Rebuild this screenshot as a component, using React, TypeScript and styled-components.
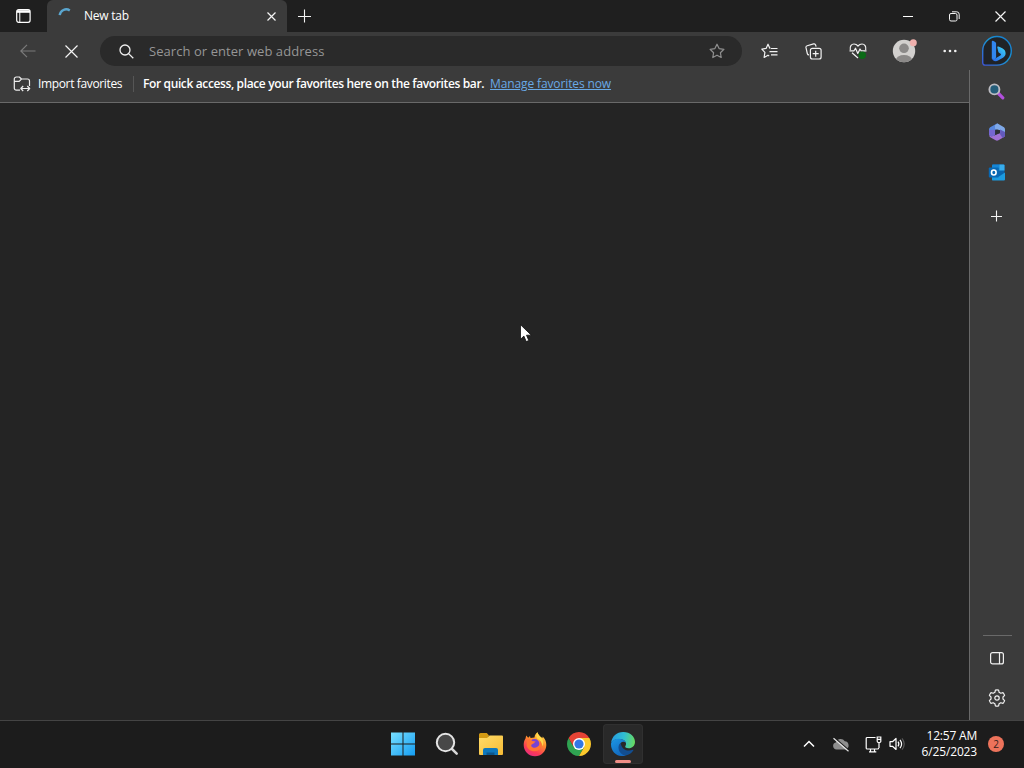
import React from 'react';
import styled, { createGlobalStyle, css } from 'styled-components';

function App() {
  return (
    <Desktop>
      <GlobalStyle />
      <Browser>
        <TitleBar>
          <Slot $w={47}>
            <TabActionsIcon />
          </Slot>
          <Tab>
            <SpinnerIcon />
            <TabTitle>New tab</TabTitle>
            <CrossIcon size={9} />
          </Tab>
          <Slot $w={35}>
            <PlusIcon size={14} />
          </Slot>
          <Spacer />
          <Slot $w={46}>
            <svg width="10" height="10">
              <path d="M0 5.5h10" stroke="#fff" />
            </svg>
          </Slot>
          <Slot $w={46}>
            <RestoreIcon />
          </Slot>
          <Slot $w={47}>
            <CrossIcon size={11} />
          </Slot>
        </TitleBar>

        <Toolbar>
          <Slot $w={44}>
            <BackIcon />
          </Slot>
          <Slot $w={43}>
            <CrossIcon size={13} />
          </Slot>
          <AddressBar>
            <SearchIcon />
            <Placeholder>Search or enter web address</Placeholder>
            <StarIcon />
          </AddressBar>
          <Slot $w={43}>
            <FavoritesIcon />
          </Slot>
          <Slot $w={45}>
            <CollectionsIcon />
          </Slot>
          <Slot $w={44}>
            <EssentialsIcon />
          </Slot>
          <Slot $w={48}>
            <ProfileIcon />
          </Slot>
          <Slot $w={44}>
            <svg width="14" height="4" fill="#f2f2f2">
              <circle cx="1.7" cy="2" r="1.3" />
              <circle cx="7" cy="2" r="1.3" />
              <circle cx="12.3" cy="2" r="1.3" />
            </svg>
          </Slot>
          <Slot $w={50}>
            <BingIcon />
          </Slot>
        </Toolbar>

        <Body>
          <Main>
            <FavoritesBar>
              <ImportIcon />
              <ImportLabel>Import favorites</ImportLabel>
              <Separator />
              <Hint>For quick access, place your favorites here on the favorites bar.</Hint>
              <ManageLink>Manage favorites now</ManageLink>
            </FavoritesBar>
            <Page />
          </Main>
          <Sidebar>
            <SideItem $h={42}>
              <SidebarSearchIcon />
            </SideItem>
            <SideItem $h={40}>
              <OfficeIcon />
            </SideItem>
            <SideItem $h={40}>
              <OutlookIcon />
            </SideItem>
            <SideItem $h={47}>
              <PlusIcon size={12} />
            </SideItem>
            <Spacer />
            <SideRule />
            <SideItem $h={40}>
              <PanelIcon />
            </SideItem>
            <SideItem $h={40}>
              <GearIcon />
            </SideItem>
          </Sidebar>
        </Body>
      </Browser>

      <Taskbar>
        <Apps>
          <AppButton>
            <WindowsIcon />
          </AppButton>
          <AppButton>
            <TaskSearchIcon />
          </AppButton>
          <AppButton>
            <ExplorerIcon />
          </AppButton>
          <AppButton>
            <FirefoxIcon />
          </AppButton>
          <AppButton>
            <ChromeIcon />
          </AppButton>
          <AppButton $active>
            <EdgeIcon />
          </AppButton>
        </Apps>
        <Tray>
          <Slot $w={32}>
            <svg width="12" height="8" fill="none" stroke="#fff" strokeWidth="1.5">
              <path d="M1 6.5l5-5 5 5" />
            </svg>
          </Slot>
          <Slot $w={32}>
            <CloudIcon />
          </Slot>
          <Slot $w={32}>
            <NetworkIcon />
          </Slot>
          <Slot $w={16}>
            <SpeakerIcon />
          </Slot>
          <Clock>
            <ClockLine $spacing={-0.2}>12:57 AM</ClockLine>
            <ClockLine $spacing={-0.16}>6/25/2023</ClockLine>
          </Clock>
          <Badge>2</Badge>
        </Tray>
      </Taskbar>
      <Pointer width="14" height="20" viewBox="0 0 14 20">
        <path d="M.5.7v14.6l3.4-3.2 2.3 5.5 2.6-1.1-2.3-5.3h4.8z" fill="#fff" stroke="#111" strokeWidth=".8" />
      </Pointer>
    </Desktop>
  );
}

export default App;

// Icons
function TabActionsIcon() {
  return (
    <svg width="15" height="14" fill="none" stroke="#fff" strokeWidth="1.2">
      <rect x=".7" y=".7" width="13.400" height="12.6" rx="2" />
      <path d="M1 2.500h13" strokeWidth="2.600" />
      <path d="M3.800 3v10" strokeWidth="1" />
    </svg>
  );
}

function SpinnerIcon() {
  return (
    <Spinner width="16" height="16" fill="none">
      <path d="M1.700 7.200A6.500 6.500 0 0 1 11.800 2.500" stroke="#5aa6cf" strokeWidth="2.400" />
    </Spinner>
  );
}

function CrossIcon({ size }: { size: number }) {
  return (
    <svg width={size} height={size} viewBox={`0 0 ${size} ${size}`} fill="none" stroke="#f4f4f4" strokeWidth="1.2">
      <path d={`M.5.5L${size - 0.5} ${size - 0.5}M${size - 0.5}.5L.5 ${size - 0.5}`} />
    </svg>
  );
}

function PlusIcon({ size }: { size: number }) {
  const mid = size / 2 - 0.5;

  return (
    <svg width={size} height={size} fill="none" stroke="#f4f4f4" strokeWidth="1.1">
      <path d={`M${mid} .5v${size - 1}M0 ${mid + 1}h${size - 1}`} />
    </svg>
  );
}

function RestoreIcon() {
  return (
    <svg width="11" height="11" fill="none" stroke="#f4f4f4">
      <rect x=".5" y="2.5" width="7.5" height="7.5" rx="1.5" />
      <path d="M3 .8h4.7A2.5 2.5 0 0 1 10.200 3.300V8" />
    </svg>
  );
}

function BackIcon() {
  return (
    <svg width="16" height="14" fill="none" stroke="#7b7b7b" strokeWidth="1.2">
      <path d="M15.500 7H1M7 .8L.8 7 7 13.200" />
    </svg>
  );
}

function SearchIcon() {
  return (
    <svg width="15" height="15" fill="none" stroke="#f0f0f0" strokeWidth="1.3">
      <circle cx="6" cy="6" r="5" />
      <path d="M9.600 9.600l4.700 4.700" />
    </svg>
  );
}

const STAR = 'M8 1.200l2.100 4.400 4.800.7-3.500 3.400.8 4.800L8 12.200l-4.200 2.300.8-4.800L1.100 6.300l4.800-.7z';

function StarIcon() {
  return (
    <svg width="16" height="16" fill="none" stroke="#909090" strokeWidth="1.2" strokeLinejoin="round">
      <path d={STAR} />
    </svg>
  );
}

function FavoritesIcon() {
  return (
    <svg width="17" height="16" fill="none" stroke="#f2f2f2" strokeWidth="1.2" strokeLinejoin="round">
      <path d="M9.500 5.200h-.7L7 1.200 5.100 5.400.8 6.100l3.100 3.200-.8 5.200 3.900-2.300 1.200.7" />
      <path d="M10 5.500h6.500M8.500 8.700h8M10 11.900h6.500" />
    </svg>
  );
}

function CollectionsIcon() {
  return (
    <svg width="17" height="17" fill="none" stroke="#f2f2f2" strokeWidth="1.2">
      <path d="M4 11.900c-1 0-1.500-.5-1.700-1.400L1 4.700c-.2-1 .2-1.700 1.200-2L8.600.9c1-.3 1.700.1 2 1.100l.5 1.600" />
      <rect x="5.400" y="5.300" width="10.700" height="10.700" rx="2" />
      <path d="M10.700 7.700v6M7.700 10.700h6" />
    </svg>
  );
}

function EssentialsIcon() {
  return (
    <svg width="18" height="16" fill="none" stroke="#f2f2f2" strokeWidth="1.200" strokeLinejoin="round">
      <path d="M1.300 7C.6 3.500 2.400 1 5 1c1.700 0 3 .8 4 2 1-1.200 2.300-2 4-2 2.600 0 4.400 2.500 3.700 6" />
      <path d="M.5 7.800H5l1.500-2.600 2.300 5.200L11 6l1.200 1.800h5.300M3 9.800l6 5.200" />
      <circle cx="13.300" cy="12.200" r="3.700" fill="#0b6a17" stroke="none" />
    </svg>
  );
}

function ProfileIcon() {
  return (
    <svg width="26" height="26">
      <clipPath id="face">
        <circle cx="13" cy="13" r="11.200" />
      </clipPath>
      <g clipPath="url(#face)">
        <rect width="26" height="26" fill="#d2d0ce" />
        <circle cx="13" cy="10.300" r="4.800" fill="#8b8988" />
        <ellipse cx="13" cy="22" rx="8" ry="5" fill="#8b8988" />
      </g>
      <circle cx="22.300" cy="4.700" r="3.500" fill="#eeb0ad" />
    </svg>
  );
}

function BingIcon() {
  return (
    <svg width="32" height="32">
      <defs>
        <linearGradient id="bingRing" x1="0" y1="1" x2="1" y2="0">
          <stop offset="0" stopColor="#3d55d8" />
          <stop offset=".5" stopColor="#1a93d0" />
          <stop offset="1" stopColor="#1679cf" />
        </linearGradient>
        <linearGradient id="bingMark" x1="0" y1="1" x2="1" y2="0">
          <stop offset="0" stopColor="#2a64e6" />
          <stop offset=".6" stopColor="#32a6f5" />
          <stop offset="1" stopColor="#42ddf3" />
        </linearGradient>
      </defs>
      <path
        d="M16 1.500a14.300 14.300 0 1 1 0 28.600H4.200c-1.600 0-2.500-.9-2.500-2.500V15.800A14.300 14.300 0 0 1 16 1.500z"
        fill="#202327"
        stroke="url(#bingRing)"
        strokeWidth="1.400"
      />
      <path d="M10.800 6.500c0-.7.600-1 1.200-.7l2.200 1.200c.6.400.9.900.9 1.600v13.600l-1.300 2.800-3-1.200z" fill="#3186f0" />
      <path
        d="M16.400 12.800c-.5-1 .1-1.700 1.100-1.300l3.800 1.800c2.100 1 3.300 2.700 3.300 5 0 2-.9 3.400-2.600 4.400l-5 2.900c-2.900 1.600-6.200-.2-6.200-3.200.8 1.400 2.400 1.700 3.800.8l4.700-2.800c.9-.6.9-1.500-.1-2l-.8-.4c-.6-.3-.9-.7-1.100-1.300z"
        fill="url(#bingMark)"
      />
    </svg>
  );
}

function ImportIcon() {
  return (
    <svg width="18" height="16" fill="none" stroke="#ededed" strokeWidth="1.200" strokeLinejoin="round">
      <path d="M7 14.200H3.300A2 2 0 0 1 1.300 12.200V3a2 2 0 0 1 2-2h3l2.200 2h6a2 2 0 0 1 2 2v5M1.300 5.300h4.900l2.300-2.300" />
      <path d="M8 12.500h8.500M10.200 10L7.800 12.500l2.400 2.500M14.300 10l2.400 2.500-2.400 2.500" />
    </svg>
  );
}

function SidebarSearchIcon() {
  return (
    <svg width="18" height="17">
      <path d="M10.500 10.500l4.300 4.300" stroke="#b14fdc" strokeWidth="3.200" strokeLinecap="round" />
      <circle cx="6.400" cy="6.400" r="5" fill="#245d79" stroke="#bcbcc2" strokeWidth="1.900" />
    </svg>
  );
}

function OfficeIcon() {
  return (
    <svg width="18" height="18">
      <path d="M8.500.7L2.600 4.100C1.500 4.700 1 5.600 1 6.800v5l4.700 2.500 1.500-7L12 4.500V2.500L10 .9c-.5-.4-1-.5-1.500-.2z" fill="#5787dd" />
      <path d="M9.500.6L15.600 4.100c.9.500 1.400 1.400 1.400 2.500v5.200l-4.700.5-.3-5-5-1.500V2.200z" fill="#7fa9e8" />
      <path d="M17 9.500v2.400c0 1-.5 1.900-1.400 2.400l-5.200 3c-.9.500-1.900.5-2.800 0l-5-2.900C1.700 13.900 1.200 13.200 1 12.300c1.500 1.200 4 1.200 5.500.2l5.600-3.300z" fill="#a172d3" />
      <path d="M1 7v5c1 1.300 3.400 1.700 5 .8l1.200-.7V6.700z" fill="#7566cf" />
      <path d="M12.100 6.500L17 9v2.900c0 1-.5 1.900-1.400 2.400l-1 .6-2.500-3.600z" fill="#625abb" />
      <path d="M7.200 6.700L12 7.500v2.700L7.200 12z" fill="#2d3035" />
    </svg>
  );
}

function OutlookIcon() {
  return (
    <svg width="18" height="17">
      <rect x="4" y=".5" width="12.500" height="14" rx="1" fill="#0a64ad" />
      <path d="M5 .5h6.300v6H4V1.500a1 1 0 0 1 1-1z" fill="#1686d5" />
      <path d="M11.300.5h4.200a1 1 0 0 1 1 1v5h-5.200z" fill="#38adec" />
      <path d="M4 16V9l7 3.500L17 8.600v6.900a1 1 0 0 1-1 1H4.500z" fill="#1c9be0" />
      <rect x=".8" y="3.500" width="10" height="10" rx="1" fill="#0868b4" />
      <ellipse cx="5.800" cy="8.500" rx="2.300" ry="2.500" fill="none" stroke="#fff" strokeWidth="1.600" />
    </svg>
  );
}

function PanelIcon() {
  return (
    <svg width="14" height="13" fill="none" stroke="#f0f0f0" strokeWidth="1.200">
      <rect x=".6" y=".6" width="12.800" height="11.300" rx="2" />
      <path d="M9.500 1v11" />
    </svg>
  );
}

function GearIcon() {
  return (
    <svg width="18" height="18" fill="none" stroke="#f0f0f0" strokeWidth="1.200" strokeLinejoin="round">
      <path d="M7.400 1.100q1.600-.4 3.200 0l.5 2.200q.8.600 1.700 1l2.200-.7q1.100 1.200 1.600 2.800L15 8q-.1 1 0 2l1.600 1.600q-.5 1.600-1.600 2.800l-2.200-.7q-.9.400-1.700 1l-.5 2.200q-1.600.4-3.200 0l-.5-2.200q-.8-.6-1.700-1l-2.200.7Q1.900 13.200 1.400 11.600L3 10q.1-1 0-2L1.400 6.400Q1.900 4.800 3 3.600l2.200.7q.9-.4 1.700-1z" />
      <circle cx="9" cy="9" r="2.200" />
    </svg>
  );
}

function WindowsIcon() {
  return (
    <svg width="25" height="24">
      <linearGradient id="win" x1="0" y1="0" x2="24" y2="24" gradientUnits="userSpaceOnUse">
        <stop offset="0" stopColor="#79e0ff" />
        <stop offset="1" stopColor="#139cf2" />
      </linearGradient>
      <path d="M0 .5h11.500v11H0zM12.500.5H24v11H12.500zM0 12.500h11.500v11H0zM12.500 12.500H24v11H12.500z" fill="url(#win)" />
    </svg>
  );
}

function TaskSearchIcon() {
  return (
    <svg width="24" height="24">
      <path d="M16.500 16.500l5.200 5.200" stroke="#d7d7d7" strokeWidth="2.500" strokeLinecap="round" />
      <circle cx="10.500" cy="10.500" r="8.700" fill="#484848" stroke="#e4e4e4" strokeWidth="2" />
    </svg>
  );
}

function ExplorerIcon() {
  return (
    <svg width="26" height="24">
      <linearGradient id="folder" x1="0" y1="0" x2="1" y2="1">
        <stop offset="0" stopColor="#ffdc69" />
        <stop offset="1" stopColor="#f6bb35" />
      </linearGradient>
      <path d="M1 2.500A1.500 1.500 0 0 1 2.500 1h6.300L11 3.500l-2 4H1z" fill="#d39a13" />
      <path d="M1 6h8l2.500-2.500H24a1 1 0 0 1 1 1V22a1 1 0 0 1-1 1H2a1 1 0 0 1-1-1z" fill="url(#folder)" />
      <path d="M5 23v-5a2 2 0 0 1 2-2h11a2 2 0 0 1 2 2v5z" fill="#0e78bd" />
      <path d="M8.500 23v-2.500h8V23z" fill="#0d568c" />
    </svg>
  );
}

function FirefoxIcon() {
  return (
    <svg width="24" height="25">
      <linearGradient id="fox" x1="18" y1="0" x2="5" y2="24" gradientUnits="userSpaceOnUse">
        <stop offset="0" stopColor="#ffe449" />
        <stop offset=".4" stopColor="#ff8b2e" />
        <stop offset=".75" stopColor="#fb3a55" />
        <stop offset="1" stopColor="#e42b88" />
      </linearGradient>
      <path d="M2.500 6.500l.7-3 2 2.300L7 4l.5 2 4-.5c.2-2.300 1.200-4 3-5.200.4 2.400 2 3.400 3.500 5l1.500.8.2-1.600c2.600 2.400 3.600 5.300 3.600 8.500a11.300 11.300 0 1 1-22.600 0c0-2.500.5-4.700 1.800-6.500z" fill="url(#fox)" />
      <circle cx="11.500" cy="12" r="5" fill="#7543d4" />
      <path d="M4 7.500c2-.8 4-.2 5.300 1.500l3.400.6-2.500 2.200c-1.800.3-2.300 1.500-1.700 2.700 2.700 2.700 6.700.5 8-2 .7-2 .4-4-.9-5.500 3.700 1.700 4.200 7 1.400 10-4 4-11.500 2.500-13.300-3z" fill="#ff7334" />
      <path d="M14.500.3c.4 2.400 2 3.400 3.500 5 2.500 2.800 3 6 1.400 9-.3-4-2-5.800-4.600-7.300-2-1.400-1.600-4.700-.3-6.700z" fill="#ffd849" />
    </svg>
  );
}

function ChromeIcon() {
  return (
    <svg width="24" height="24">
      <path d="M1.610 6A12 12 0 0 0 12 24l5.200-9H6.800z" fill="#2fa351" />
      <path d="M22.390 6A12 12 0 0 1 12 24l5.200-9L12 6z" fill="#fcc92c" />
      <path d="M1.610 6l5.190 9L12 6h10.390A12 12 0 0 0 1.610 6z" fill="#e54335" />
      <circle cx="12" cy="12" r="6" fill="#fff" />
      <circle cx="12" cy="12" r="4.600" fill="#3277e5" />
    </svg>
  );
}

function EdgeIcon() {
  return (
    <svg width="24" height="24">
      <defs>
        <linearGradient id="edgeTop" x1="0" y1="8" x2="24" y2="12" gradientUnits="userSpaceOnUse">
          <stop offset="0" stopColor="#269be0" />
          <stop offset=".5" stopColor="#30bfd3" />
          <stop offset="1" stopColor="#6bdc58" />
        </linearGradient>
        <linearGradient id="edgeLow" x1="0" y1="8" x2="10" y2="24" gradientUnits="userSpaceOnUse">
          <stop offset="0" stopColor="#1b94e2" />
          <stop offset="1" stopColor="#1267bd" />
        </linearGradient>
      </defs>
      <path d="M.1 10.800C.9 4.400 5.700 0 12.200 0 19.300 0 24 4.800 24 10c0 3.800-2.900 6.300-6.300 6.300-2.800 0-4.100-.9-3.300-2.200 1.500-2.100.5-5.200-2.400-6.300C7.700 6 2 7.400.1 10.800z" fill="url(#edgeTop)" />
      <path d="M.1 11C1.800 7.700 5.600 6.300 9.500 7c2.900.5 4.800 1.800 5.500 3.700-1.800-1.500-4-1.300-5.300.2C6.800 14.500 9 21 15 23.500 6.500 26-.8 19.500.1 11z" fill="url(#edgeLow)" />
      <path d="M9.700 10.900C6 13 6.500 21.800 14.700 23.600c3.300-.6 6-2.500 7.700-5.300.3-.5 0-.7-.5-.5-5.600 2.400-11.500-.7-12.200-6.900z" fill="#124e91" />
    </svg>
  );
}

function CloudIcon() {
  return (
    <svg width="18" height="15">
      <path d="M4.500 12.500a3.500 3.500 0 0 1-.7-6.900 5 5 0 0 1 9-1.300 4.200 4.200 0 0 1 .8 8.200z" fill="#8e8e8e" />
      <path d="M2.200 .5l15 13" stroke="#1c1c1c" strokeWidth="1.200" />
      <path d="M1.500 1.200l15 13" stroke="#e5e5e5" strokeWidth="1.200" />
    </svg>
  );
}

function NetworkIcon() {
  return (
    <svg width="17" height="17" fill="none" stroke="#fff" strokeWidth="1.200">
      <path d="M10.500 1.500H2.300c-.7 0-1.100.4-1.100 1.100v9.300c0 .7.4 1.100 1.100 1.100h10.200c.7 0 1.100-.4 1.100-1.100M5.500 13v2.700M9.500 13v2.700M4 15.800h7.300" />
      <path d="M12.200 1h3.600v4.300c0 .8-.4 1.200-1.200 1.200H13.400c-.8 0-1.200-.4-1.200-1.200zM12.200 3.300h3.600M14 6.500V12" />
    </svg>
  );
}

function SpeakerIcon() {
  return (
    <svg width="17" height="14" fill="none" stroke="#fff" strokeWidth="1.200" strokeLinejoin="round">
      <path d="M1 4.700h2.500L7 1.500v11L3.500 9.300H1z" />
      <path d="M9 4.700q1.700 2.300 0 4.600M11 2.800q3.200 4.200 0 8.400" />
      <path d="M13 1.300q4.500 5.700 0 11.400" stroke="#585858" />
    </svg>
  );
}

// Styles
const GlobalStyle = createGlobalStyle`
  * {
    box-sizing: border-box;
  }

  body {
    margin: 0;
    overflow: hidden;
    font-family: 'Open Sans', 'Noto Sans', sans-serif;
    color: #fff;
  }

  svg {
    display: block;
    flex-shrink: 0;
  }
`;

const Desktop = styled.div`
  display: flex;
  flex-direction: column;
  width: 1024px;
  height: 768px;
  background: #1c1c1c;
`;

const Browser = styled.div`
  display: flex;
  flex-direction: column;
  height: 720px;
  background: #3b3b3b;
`;

const Slot = styled.div<{ $w: number }>`
  display: flex;
  align-items: center;
  justify-content: center;
  flex-shrink: 0;
  width: ${(props) => props.$w}px;
  height: 100%;
`;

const Spacer = styled.div`
  flex: 1;
`;

const TitleBar = styled.header`
  display: flex;
  height: 32px;
  background: #1f1f1f;
`;

const Tab = styled.div`
  display: flex;
  align-items: center;
  width: 240px;
  padding: 0 11px;
  border-radius: 6px 6px 0 0;
  background: #3b3b3b;
`;

const Spinner = styled.svg`
  margin-right: 10px;
`;

const TabTitle = styled.span`
  flex: 1;
  padding-bottom: 2px;
  font-size: 12px;
  letter-spacing: -0.25px;
`;

const Toolbar = styled.div`
  display: flex;
  align-items: center;
  height: 38px;
  padding-left: 6px;
`;

const AddressBar = styled.div`
  display: flex;
  align-items: center;
  width: 642px;
  height: 30px;
  margin: 0 6px 0 7px;
  padding: 0 17px 0 19px;
  border-radius: 15px;
  background: #2a2a2a;
`;

const Placeholder = styled.span`
  flex: 1;
  margin-left: 15px;
  font-size: 13px;
  letter-spacing: 0.06px;
  color: #969696;
`;

const Body = styled.div`
  display: flex;
  flex: 1;
`;

const Main = styled.main`
  display: flex;
  flex-direction: column;
  flex: 1;
`;

const FavoritesBar = styled.div`
  display: flex;
  align-items: center;
  height: 33px;
  padding: 0 0 5px 13px;
  border-bottom: 1px solid #696969;
  font-size: 12px;
  white-space: nowrap;
`;

const ImportLabel = styled.span`
  width: 88px;
  margin-left: 7px;
  letter-spacing: -0.36px;
`;

const Separator = styled.i`
  width: 1px;
  height: 16px;
  margin: 0 9px 0 7px;
  background: #565656;
`;

const Hint = styled.span`
  width: 347px;
  font-weight: 600;
  letter-spacing: -0.37px;
`;

const ManageLink = styled.a`
  color: #69a9e5;
  letter-spacing: -0.12px;
  text-decoration: underline;
`;

const Page = styled.div`
  flex: 1;
  background: #242424;
`;

const Sidebar = styled.aside`
  display: flex;
  flex-direction: column;
  align-items: center;
  width: 55px;
  padding-bottom: 2px;
  border-left: 1px solid #696969;
`;

const SideItem = styled.div<{ $h: number }>`
  display: flex;
  align-items: center;
  justify-content: center;
  height: ${(props) => props.$h}px;
`;

const SideRule = styled.div`
  width: 29px;
  height: 1px;
  margin-bottom: 2px;
  background: #696969;
`;

const Taskbar = styled.footer`
  display: flex;
  justify-content: space-between;
  height: 48px;
  padding-left: 380px;
  border-top: 1px solid #444;
  background: #1c1c1c;
`;

const Apps = styled.div`
  display: flex;
  gap: 4px;
  padding: 3px 0 0 3px;
`;

const AppButton = styled.div<{ $active?: boolean }>`
  display: flex;
  align-items: center;
  justify-content: center;
  width: 40px;
  height: 40px;
  border-radius: 4px;

  ${(props) =>
    props.$active &&
    css`
      position: relative;
      background: #292929;
      box-shadow: inset 0 0 0 1px #303030;

      &::after {
        content: '';
        position: absolute;
        bottom: 1px;
        left: 12px;
        width: 16px;
        height: 3px;
        border-radius: 2px;
        background: #f08e87;
      }
    `}
`;

const Tray = styled.div`
  display: flex;
  align-items: center;
  padding: 0 20px 1px 0;
`;

const Clock = styled.div`
  display: flex;
  flex-direction: column;
  align-items: flex-end;
  width: 72px;
  margin-right: 11px;
`;

const ClockLine = styled.span<{ $spacing: number }>`
  font-size: 12px;
  line-height: 16px;
  letter-spacing: ${(props) => props.$spacing}px;
  white-space: nowrap;
`;

const Badge = styled.span`
  width: 16px;
  height: 16px;
  border-radius: 50%;
  background: #ed735b;
  color: #35201b;
  font-size: 10px;
  line-height: 16px;
  text-align: center;
`;

const Pointer = styled.svg`
  position: absolute;
  top: 324px;
  left: 520px;
`;
